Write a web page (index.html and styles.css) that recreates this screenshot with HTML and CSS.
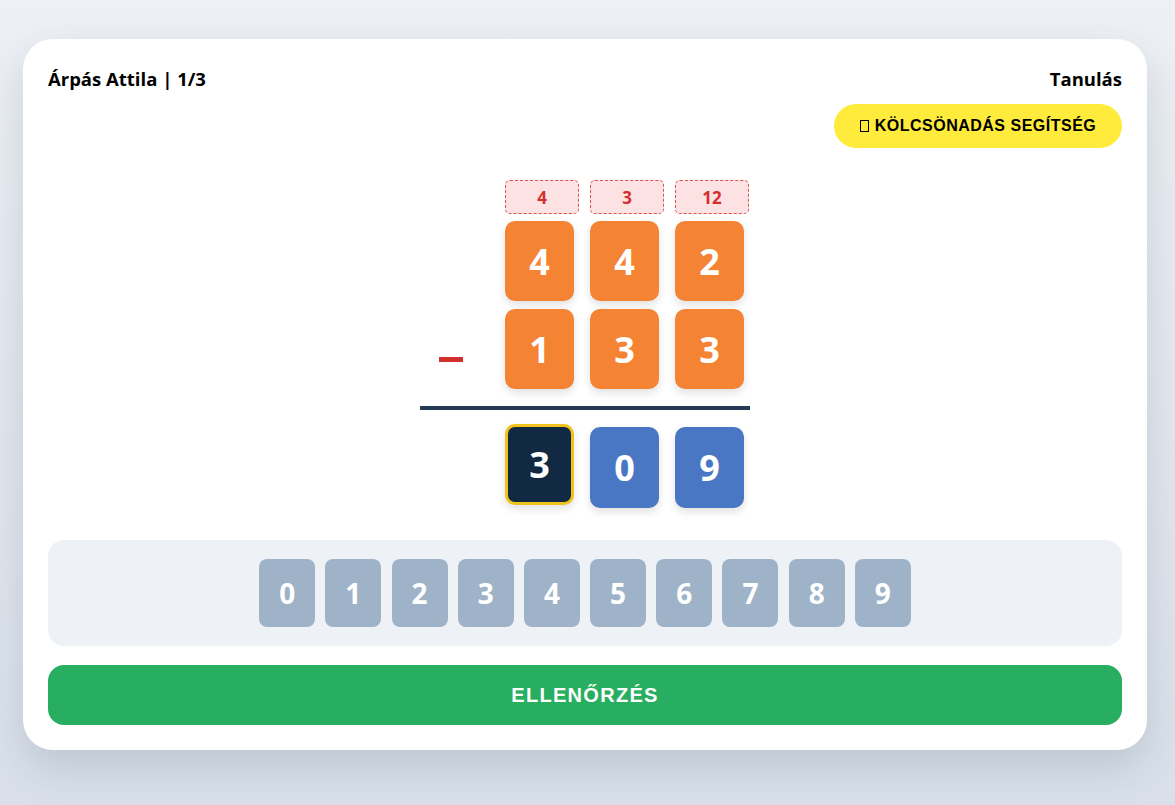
FILE: index.html
```html
<!DOCTYPE html>
<html lang="hu">
<head>
<meta charset="utf-8">
<title>Kivonás</title>
<link rel="stylesheet" href="styles.css">
</head>
<body>
<main class="card">
  <header class="top">
    <div class="player">Árpás Attila | 1/3</div>
    <div class="mode">Tanulás</div>
  </header>
  <div class="help-row">
    <button class="help-btn"><span class="tofu"></span> KÖLCSÖNADÁS SEGÍTSÉG</button>
  </div>
  <section class="board">
    <div class="op"></div>
    <div class="borrow">4</div>
    <div class="borrow">3</div>
    <div class="borrow">12</div>

    <div class="op"></div>
    <div class="tile orange">4</div>
    <div class="tile orange">4</div>
    <div class="tile orange">2</div>

    <div class="op"><span class="minus"></span></div>
    <div class="tile orange">1</div>
    <div class="tile orange">3</div>
    <div class="tile orange">3</div>

    <div class="rule"></div>

    <div class="op"></div>
    <div class="tile result active">3</div>
    <div class="tile result">0</div>
    <div class="tile result">9</div>
  </section>
  <section class="keypad">
    <button class="key">0</button>
    <button class="key">1</button>
    <button class="key">2</button>
    <button class="key">3</button>
    <button class="key">4</button>
    <button class="key">5</button>
    <button class="key">6</button>
    <button class="key">7</button>
    <button class="key">8</button>
    <button class="key">9</button>
  </section>
  <button class="check">ELLENŐRZÉS</button>
</main>
</body>
</html>
```
FILE: styles.css
```css
* { box-sizing: border-box; }
html, body { margin: 0; }
body {
  min-height: 805px;
  padding: 39px 23px 55px;
  background: linear-gradient(180deg, #edf0f4 0%, #d9e0e9 100%);
  font-family: "Open Sans", "Noto Sans", sans-serif;
}
.card {
  width: 1124px;
  background: #ffffff;
  border-radius: 30px;
  padding: 25px;
  box-shadow: 0 18px 40px rgba(60, 80, 110, 0.18);
  display: flex;
  flex-direction: column;
}
.top {
  display: flex;
  justify-content: space-between;
  align-items: center;
  height: 28px;
  margin-bottom: 2px;
  font-size: 18.5px;
  font-weight: 700;
  color: #000;
}
.help-row {
  display: flex;
  justify-content: flex-end;
  margin-top: 10px;
}
.help-btn {
  width: 288px;
  height: 44px;
  border: none;
  border-radius: 22px;
  background: #ffeb3b;
  font-family: "Liberation Sans", Arial, sans-serif;
  font-weight: 700;
  font-size: 16px;
  letter-spacing: 0.5px;
  color: #000;
  display: flex;
  align-items: center;
  justify-content: center;
  gap: 6px;
  padding: 0;
}
.tofu {
  display: inline-block;
  width: 9px;
  height: 12px;
  border: 1.5px solid #000;
}
.board {
  align-self: center;
  margin-top: 32px;
  display: grid;
  grid-template-columns: repeat(4, 75px);
  column-gap: 10px;
  grid-template-rows: 34px 87px 88px 21px 98px;
}
.op { display: flex; align-items: center; }
.minus {
  display: block;
  width: 24px;
  height: 5px;
  background: #d32f2f;
  margin-left: 19px;
  margin-top: 21px;
}
.borrow {
  width: 74px;
  height: 34px;
  border: 1px dashed #d9534f;
  border-radius: 5px;
  background: #fde2e4;
  color: #d32f2f;
  font-weight: 700;
  font-size: 17px;
  display: flex;
  align-items: center;
  justify-content: center;
}
.tile {
  width: 69px;
  height: 80px;
  border-radius: 10px;
  color: #fff;
  font-weight: 700;
  font-size: 36px;
  display: flex;
  align-items: center;
  justify-content: center;
  box-shadow: 0 4px 8px rgba(0, 0, 0, 0.12);
}
.orange { background: #f48333; }
.board > .tile:nth-child(n+6):nth-child(-n+8) { margin-top: 7px; }
.board > .op:nth-child(9), .board > .tile:nth-child(n+10):nth-child(-n+12) { margin-top: 8px; }
.rule {
  grid-column: 1 / -1;
  height: 4px;
  background: #253a57;
  align-self: end;
}
.result {
  background: #4a77c4;
  height: 81px;
  margin-top: 17px;
}
.result.active {
  background: #122944;
  border: 3px solid #f1c21b;
  transform: translateY(-3px);
}
.keypad {
  margin-top: 32px;
  background: #eef2f7;
  border-radius: 16px;
  padding: 19px;
  display: flex;
  justify-content: center;
  gap: 10.2px;
}
.key {
  width: 56px;
  height: 68px;
  border: none;
  border-radius: 8px;
  background: #9fb3c8;
  color: #fff;
  font-family: "Open Sans", "Noto Sans", sans-serif;
  font-weight: 700;
  font-size: 28px;
  padding: 0;
}
.check {
  margin-top: 19px;
  height: 60px;
  border: none;
  border-radius: 16px;
  background: #27ae60;
  color: #fff;
  font-family: "Liberation Sans", Arial, sans-serif;
  font-weight: 700;
  font-size: 20px;
  letter-spacing: 1.3px;
}
```
